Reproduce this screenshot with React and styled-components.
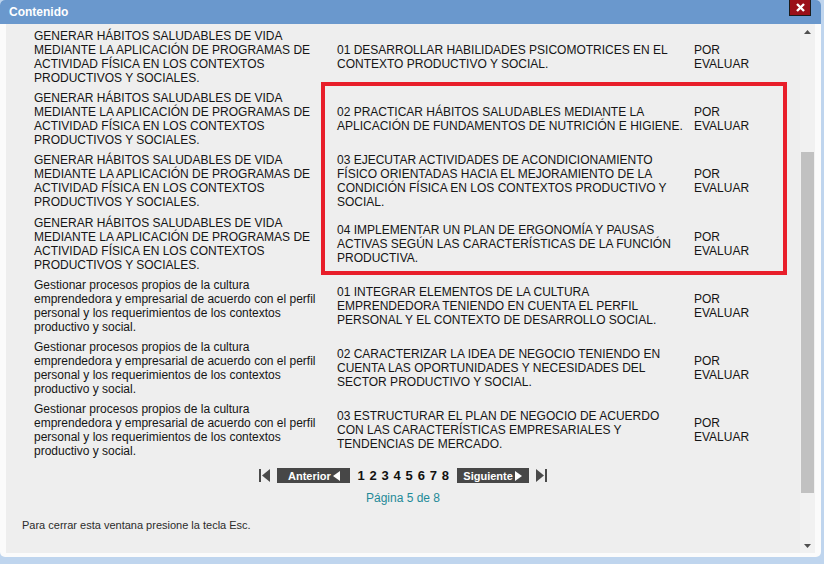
import React from "react";
import styled, { createGlobalStyle } from "styled-components";

const GlobalStyle = createGlobalStyle`
html, body {
    margin: 0;
    padding: 0;
    background: #bfd5ee;
    font-family: "Liberation Sans", Arial, sans-serif;
}
`

const Window = styled.div`
position: relative;
width: 821px;
height: 557px;
background: #fbfbfb;
border-radius: 5px;
display: flex;
flex-direction: column;
overflow: hidden;
box-sizing: border-box;
`

const TitleBar = styled.div`
height: 24px;
flex: none;
background: #6a98cd;
display: flex;
align-items: center;
justify-content: space-between;
padding-left: 9px;
padding-right: 10px;
color: white;
font-weight: bold;
font-size: 12px;
`

const CloseButton = styled.div`
align-self: flex-start;
width: 22px;
height: 16px;
box-sizing: border-box;
background: #9b1018;
border: 1px solid #1b1b1b;
border-top: none;
display: flex;
align-items: center;
justify-content: center;
`

const Frame = styled.div`
flex: 1;
display: flex;
margin: 0 6px 4px 6px;
background: #eeeeee;
min-height: 0;
`

const Content = styled.div`
flex: 1;
display: flex;
flex-direction: column;
padding: 2px 0 0 28px;
`

const Table = styled.div`
display: grid;
grid-template-columns: 303px 357px 80px;
grid-auto-rows: 62.2px;
color: #151515;
font-size: 12px;
line-height: 14px;
`

const Cell = styled.div`
display: flex;
align-items: center;
padding-right: ${p => p.gap || 0}px;
`

const Pager = styled.div`
display: flex;
align-items: center;
justify-content: center;
margin-left: -28px;
margin-top: 7px;
height: 15px;
gap: 7px;
`

const PagerButton = styled.div`
height: 15px;
width: ${p => p.w}px;
background: #474747;
color: white;
font-weight: bold;
font-size: 11px;
display: flex;
align-items: center;
justify-content: center;
gap: 2px;
`

const Numbers = styled.div`
font-size: 13px;
font-weight: bold;
color: #111;
letter-spacing: 0.6px;
`

const PageInfo = styled.div`
margin-left: -28px;
margin-top: 8px;
text-align: center;
color: #1e8a98;
font-size: 12px;
line-height: 14px;
`

const Footer = styled.div`
margin-left: -12px;
margin-top: 14px;
font-size: 11px;
color: #2b2b2b;
`

const Scrollbar = styled.div`
width: 15px;
flex: none;
background: #f1f1f1;
display: flex;
flex-direction: column;
align-items: center;
padding: 6px 0 5px;
box-sizing: border-box;
`

const Thumb = styled.div`
width: 13px;
background: #c1c1c1;
margin-top: 118px;
height: 341px;
`

const Spacer = styled.div`
flex: 1;
`

const Highlight = styled.div`
position: absolute;
left: 321px;
top: 82px;
width: 466px;
height: 193px;
box-sizing: border-box;
border: 4px solid #e81e2a;
pointer-events: none;
`

const compSalud = "GENERAR HÁBITOS SALUDABLES DE VIDA MEDIANTE LA APLICACIÓN DE PROGRAMAS DE ACTIVIDAD FÍSICA EN LOS CONTEXTOS PRODUCTIVOS Y SOCIALES."
const compEmpr = "Gestionar procesos propios de la cultura emprendedora y empresarial de acuerdo con el perfil personal y los requerimientos de los contextos productivo y social."

const rows = [
    [compSalud, "01 DESARROLLAR HABILIDADES PSICOMOTRICES EN EL CONTEXTO PRODUCTIVO Y SOCIAL."],
    [compSalud, "02 PRACTICAR HÁBITOS SALUDABLES MEDIANTE LA APLICACIÓN DE FUNDAMENTOS DE NUTRICIÓN E HIGIENE."],
    [compSalud, "03 EJECUTAR ACTIVIDADES DE ACONDICIONAMIENTO FÍSICO ORIENTADAS HACIA EL MEJORAMIENTO DE LA CONDICIÓN FÍSICA EN LOS CONTEXTOS PRODUCTIVO Y SOCIAL."],
    [compSalud, "04 IMPLEMENTAR UN PLAN DE ERGONOMÍA Y PAUSAS ACTIVAS SEGÚN LAS CARACTERÍSTICAS DE LA FUNCIÓN PRODUCTIVA."],
    [compEmpr, "01 INTEGRAR ELEMENTOS DE LA CULTURA EMPRENDEDORA TENIENDO EN CUENTA EL PERFIL PERSONAL Y EL CONTEXTO DE DESARROLLO SOCIAL."],
    [compEmpr, "02 CARACTERIZAR LA IDEA DE NEGOCIO TENIENDO EN CUENTA LAS OPORTUNIDADES Y NECESIDADES DEL SECTOR PRODUCTIVO Y SOCIAL."],
    [compEmpr, "03 ESTRUCTURAR EL PLAN DE NEGOCIO DE ACUERDO CON LAS CARACTERÍSTICAS EMPRESARIALES Y TENDENCIAS DE MERCADO."],
]

const Tri = ({dir, color = "white", w = 7, h = 10}) => (
    <svg width={w} height={h} viewBox="0 0 7 10">
        {dir === "left"
            ? <polygon points="7,0 7,10 0,5" fill={color}/>
            : <polygon points="0,0 0,10 7,5" fill={color}/>}
    </svg>
)

const EdgeIcon = ({dir}) => (
    <svg width="11" height="13" viewBox="0 0 11 13">
        {dir === "first"
            ? <g fill="#4a4a4a"><rect x="0" y="0" width="2" height="13"/><polygon points="11,0 11,13 3,6.5"/></g>
            : <g fill="#4a4a4a"><rect x="9" y="0" width="2" height="13"/><polygon points="0,0 0,13 8,6.5"/></g>}
    </svg>
)

const Arrow = ({up}) => (
    <svg width="7" height="4" viewBox="0 0 7 4">
        <polygon points={up ? "0,4 7,4 3.5,0" : "0,0 7,0 3.5,4"} fill="#505050"/>
    </svg>
)

const App = () => {
    return (
        <>
            <GlobalStyle/>
            <Window>
                <TitleBar>
                    <span>Contenido</span>
                    <CloseButton>
                        <svg width="9" height="9" viewBox="0 0 9 9">
                            <path d="M1 1 L8 8 M8 1 L1 8" stroke="white" strokeWidth="2.4"/>
                        </svg>
                    </CloseButton>
                </TitleBar>
                <Frame>
                    <Content>
                        <Table>
                            {rows.map((r, i) => (
                                <React.Fragment key={i}>
                                    <Cell gap={20}>{r[0]}</Cell>
                                    <Cell gap={8}>{r[1]}</Cell>
                                    <Cell>POR EVALUAR</Cell>
                                </React.Fragment>
                            ))}
                        </Table>
                        <Pager>
                            <EdgeIcon dir="first"/>
                            <PagerButton w={73}>Anterior<Tri dir="left"/></PagerButton>
                            <Numbers>1 2 3 4 5 6 7 8</Numbers>
                            <PagerButton w={72}>Siguiente<Tri dir="right"/></PagerButton>
                            <EdgeIcon dir="last"/>
                        </Pager>
                        <PageInfo>Página 5 de 8</PageInfo>
                        <Footer>Para cerrar esta ventana presione la tecla Esc.</Footer>
                    </Content>
                    <Scrollbar>
                        <Arrow up/>
                        <Thumb/>
                        <Spacer/>
                        <Arrow/>
                    </Scrollbar>
                </Frame>
                <Highlight/>
            </Window>
        </>
    );
}

export default App;
